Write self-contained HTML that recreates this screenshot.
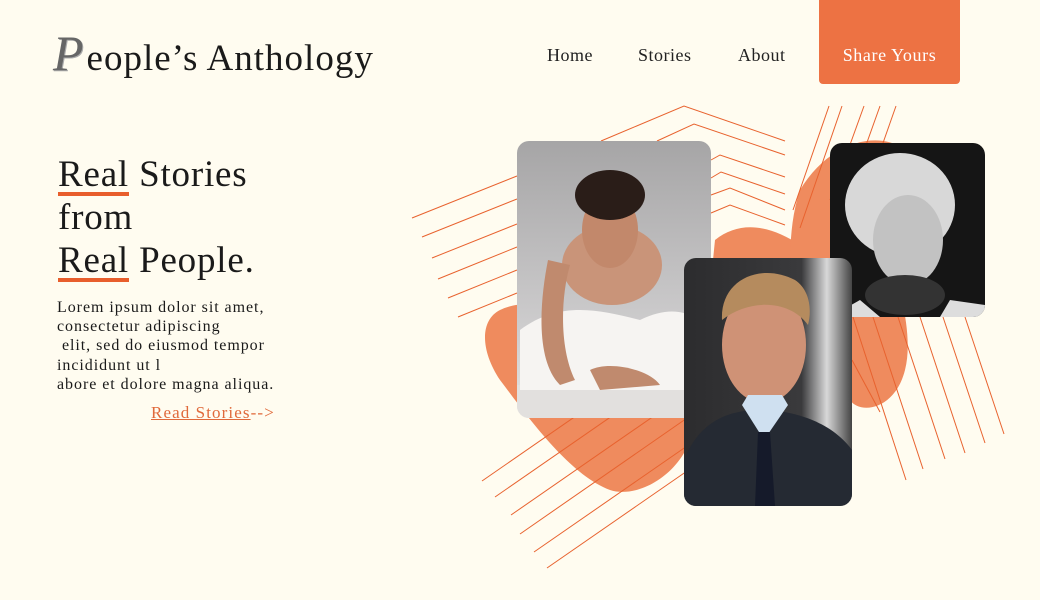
<!DOCTYPE html>
<html><head><meta charset="utf-8"><style>
*{margin:0;padding:0;box-sizing:border-box}
body{width:1040px;height:600px;background:#fffcf0;font-family:"Liberation Serif",serif;color:#1a1a1a;position:relative;overflow:hidden}
.logo{position:absolute;left:53px;top:24px;font-size:37px;letter-spacing:1px}
.logo .P{font-size:50px;font-style:italic;color:#666;font-family:"Liberation Serif",serif;text-shadow:1px 1px 0 #aaa;margin-right:2px}
.nav a{position:absolute;top:45px;font-size:18px;color:#222;text-decoration:none;letter-spacing:0.5px}
.btn{position:absolute;left:819px;top:0;width:141px;height:84px;background:#ed7243;border-radius:0 0 4px 4px;color:#fff;font-size:18px;text-align:center;padding-top:45px;letter-spacing:0.6px}
h1{position:absolute;left:58px;top:153px;font-weight:normal;font-size:37px;line-height:43px;letter-spacing:0.8px}
h1 u{text-decoration:none;border-bottom:4px solid #e85e2c;display:inline-block;line-height:34px}
p{position:absolute;left:57px;top:298px;font-size:16px;line-height:19.2px;white-space:pre;letter-spacing:0.95px}
.rs{position:absolute;left:151px;top:403px;font-size:17px;color:#e0693a;text-decoration:underline;letter-spacing:1.1px}
.rs span{text-decoration:none;display:inline-block}
svg{position:absolute;left:0;top:0}
</style></head><body>
<svg width="1040" height="600" viewBox="0 0 1040 600">
<defs>
<linearGradient id="g1" x1="0" y1="0" x2="0" y2="1"><stop offset="0" stop-color="#a6a5a6"/><stop offset=".7" stop-color="#cfcecf"/><stop offset="1" stop-color="#e6e4e3"/></linearGradient>
<linearGradient id="g2" x1="0" y1="0" x2="1" y2="0"><stop offset="0" stop-color="#2c2c2e"/><stop offset=".7" stop-color="#3a3a3c"/><stop offset=".85" stop-color="#d8d8d8"/><stop offset="1" stop-color="#444"/></linearGradient>
<clipPath id="c1"><rect x="517" y="141" width="194" height="277" rx="12"/></clipPath>
<clipPath id="c2"><rect x="684" y="258" width="168" height="248" rx="12"/></clipPath>
<clipPath id="c3"><rect x="830" y="143" width="155" height="174" rx="12"/></clipPath>
</defs>
<g fill="#ef8b5e">
<path d="M500 310 C520 300 560 300 600 330 C650 360 700 380 695 420 C690 470 640 500 610 490 C570 475 530 420 500 380 C480 350 480 320 500 310Z"/>
<path d="M715 240 C740 220 770 225 800 245 L820 270 L760 300 L712 270Z"/>
<path d="M800 190 C830 140 880 130 905 150 C920 180 900 210 890 240 C895 280 915 330 905 370 C895 410 860 415 850 400 L840 320 L790 280 C790 250 790 220 800 190Z"/>
</g>
<g stroke="#e8622e" stroke-width="1" fill="none">
<polyline points="601,141 684,106 785,141"/>
<polyline points="657,141 694,124 785,155"/>
<polyline points="711,160 720,155 785,177"/>
<polyline points="711,178 721,172 785,194"/>
<polyline points="711,195 730,188 785,210"/>
<polyline points="711,213 730,205 785,225"/>
<line x1="412" y1="218" x2="517" y2="176"/>
<line x1="422" y1="237" x2="517" y2="199"/>
<line x1="432" y1="258" x2="517" y2="224"/>
<line x1="438" y1="279" x2="517" y2="247"/>
<line x1="448" y1="298" x2="517" y2="270"/>
<line x1="458" y1="317" x2="517" y2="293"/>
<line x1="482" y1="481" x2="690" y2="337"/>
<line x1="495" y1="497" x2="690" y2="362"/>
<line x1="511" y1="515" x2="690" y2="391"/>
<line x1="520" y1="534" x2="690" y2="416"/>
<line x1="534" y1="552" x2="690" y2="444"/>
<line x1="547" y1="568" x2="690" y2="469"/>
<line x1="829" y1="106" x2="793" y2="210"/>
<line x1="842" y1="106" x2="800" y2="228"/>
<line x1="864" y1="106" x2="830" y2="200"/>
<line x1="880" y1="106" x2="850" y2="190"/>
<line x1="896" y1="106" x2="870" y2="180"/>
<line x1="853" y1="317" x2="906" y2="480"/>
<line x1="873" y1="317" x2="923" y2="469"/>
<line x1="898" y1="317" x2="945" y2="459"/>
<line x1="920" y1="317" x2="965" y2="453"/>
<line x1="943" y1="317" x2="985" y2="443"/>
<line x1="965" y1="317" x2="1004" y2="434"/>
<line x1="852" y1="360" x2="880" y2="412"/>
</g>
<g clip-path="url(#c1)">
<rect x="517" y="141" width="194" height="277" fill="url(#g1)"/>
<rect x="517" y="385" width="194" height="33" fill="#e2e0de"/>
<path d="M520 330 C560 300 600 310 640 320 C680 300 700 320 711 330 L711 390 L520 390Z" fill="#f6f4f2"/>
<ellipse cx="612" cy="265" rx="50" ry="40" fill="#c99479"/>
<ellipse cx="610" cy="230" rx="28" ry="38" fill="#c2886b"/>
<ellipse cx="610" cy="195" rx="35" ry="25" fill="#2a1d18"/>
<path d="M548 260 C540 300 535 360 560 385 L575 380 C560 350 560 300 570 265Z" fill="#c08a6e"/>
<path d="M590 370 C610 360 650 370 660 385 L600 390Z" fill="#c08a6e"/>
</g>
<g clip-path="url(#c3)">
<rect x="830" y="143" width="155" height="174" fill="#151515"/>
<ellipse cx="900" cy="205" rx="55" ry="52" fill="#d8d8d8"/>
<ellipse cx="908" cy="240" rx="35" ry="45" fill="#c2c2c2"/>
<ellipse cx="905" cy="295" rx="40" ry="20" fill="#333"/>
<path d="M860 300 L880 317 L830 317Z M950 300 L985 305 L985 317 L940 317Z" fill="#ddd"/>
</g>
<g clip-path="url(#c2)">
<rect x="684" y="258" width="168" height="248" fill="url(#g2)"/>
<ellipse cx="764" cy="345" rx="42" ry="58" fill="#cf9276"/>
<path d="M722 320 C720 280 760 262 795 280 C810 290 812 310 808 325 C790 300 750 298 722 320Z" fill="#b58b5e"/>
<path d="M684 460 C700 420 730 410 760 410 C790 410 830 420 852 450 L852 506 L684 506Z" fill="#252a33"/>
<path d="M742 405 L764 440 L788 405 L782 395 L748 395Z" fill="#cfe0f0"/>
<path d="M758 432 L770 432 L775 506 L755 506Z" fill="#151a2a"/>
</g>
</svg>
<div class="logo"><span class="P">P</span>eople’s Anthology</div>
<div class="nav"><a style="left:547px">Home</a><a style="left:638px">Stories</a><a style="left:738px">About</a></div>
<div class="btn">Share Yours</div>
<h1><u>Real</u> Stories<br>from<br><u>Real</u> People.</h1>
<p>Lorem ipsum dolor sit amet,
consectetur adipiscing
 elit, sed do eiusmod tempor
incididunt ut l
abore et dolore magna aliqua.</p>
<div class="rs">Read Stories<span>--&gt;</span></div>
</body></html>
